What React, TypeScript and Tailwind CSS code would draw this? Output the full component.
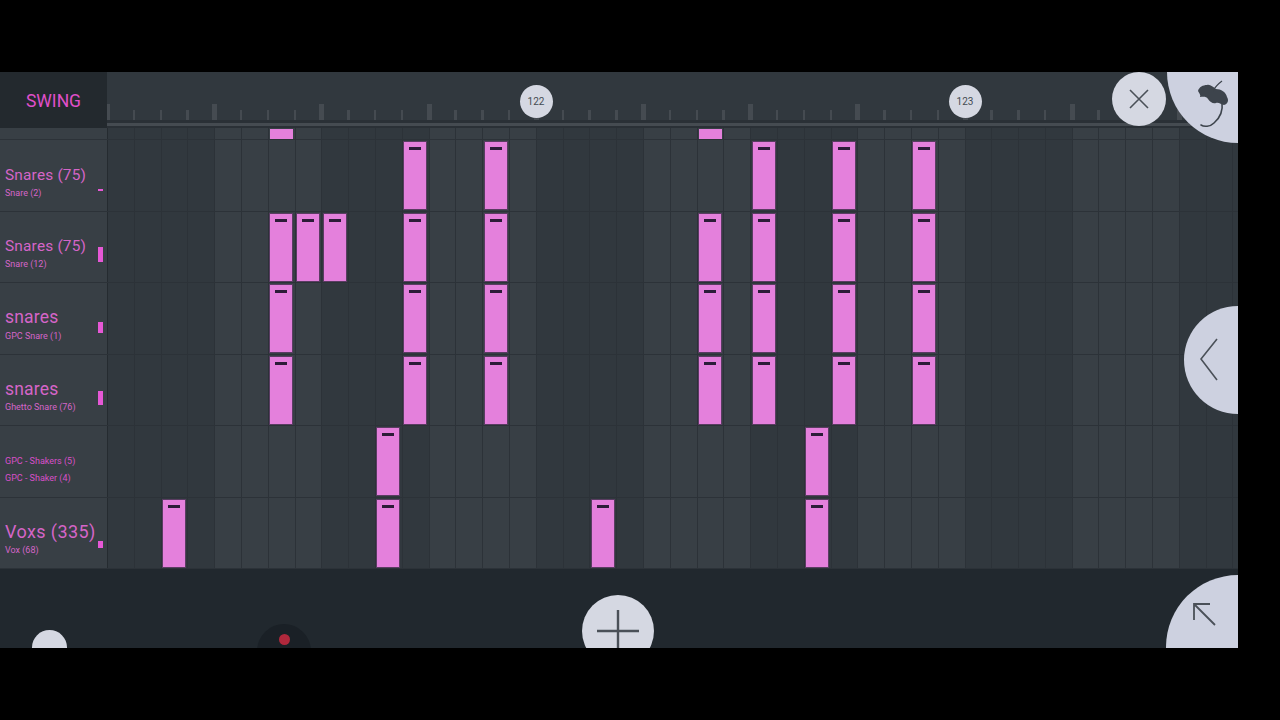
import React from 'react';

const COLS = Array.from({ length: 43 }, (_, i) => i);

type Row = {
  title?: string;
  titleClass?: string;
  labelClass?: string;
  subClass?: string;
  subs: string[];
  bar?: { top: number; height: number };
  notes: number[];
  heightClass: string;
};

const drumHits = [6, 11, 14, 22, 24, 27, 30];

const rows: Row[] = [
  { title: 'Snares (75)', titleClass: 'text-[15.4px] tracking-[0.2px]', labelClass: 'pt-[25px]', subClass: 'mt-[1px]', subs: ['Snare (2)'], bar: { top: 49, height: 2 }, notes: [11, 14, 24, 27, 30], heightClass: 'h-[72px]' },
  { title: 'Snares (75)', titleClass: 'text-[15.4px] tracking-[0.2px]', labelClass: 'pt-[24px]', subClass: 'mt-[1px]', subs: ['Snare (12)'], bar: { top: 35, height: 15 }, notes: [6, 7, 8, 11, 14, 22, 24, 27, 30], heightClass: 'h-[71px]' },
  { title: 'snares', titleClass: 'text-[17.5px] tracking-[0.2px]', labelClass: 'pt-[24px]', subClass: 'mt-[2px]', subs: ['GPC Snare (1)'], bar: { top: 39, height: 11 }, notes: drumHits, heightClass: 'h-[72px]' },
  { title: 'snares', titleClass: 'text-[17.5px] tracking-[0.2px]', labelClass: 'pt-[24px]', subClass: 'mt-[1px]', subs: ['Ghetto Snare (76)'], bar: { top: 36, height: 14 }, notes: drumHits, heightClass: 'h-[71px]' },
  { subs: ['GPC - Shakers (5)', 'GPC - Shaker (4)'], notes: [10, 26], heightClass: 'h-[72px]' },
  { title: 'Voxs (335)', titleClass: 'text-[18px] tracking-[0.4px]', labelClass: 'pt-[24px]', subClass: 'mt-[1px]', subs: ['Vox (68)'], bar: { top: 43, height: 7 }, notes: [2, 10, 18, 26], heightClass: 'h-[71px]' },
];

function Cell({ col, note, short }: { col: number; note: boolean; short?: boolean }) {
  const dark = Math.floor(col / 4) % 2 === 0;
  return (
    <div className={`flex-none w-[26.8px] h-full border-l ${col === 0 ? 'border-[#252b30]' : 'border-[#2c3238]'} ${dark ? 'bg-[#31383e]' : 'bg-[#383f45]'}`}>
      {note && short && <div className="ml-[1px] mt-[1px] w-[23.5px] h-[10px] bg-[#e480dc]" />}
      {note && !short && (
        <div className="ml-[0.5px] mt-[1px] w-[24px] h-[69px] bg-[#e480dc] border border-[#5a3c62] flex justify-center">
          <div className="mt-[5px] w-[12px] h-[2.5px] bg-[#2c1c38]" />
        </div>
      )}
    </div>
  );
}

function TrackRow({ row }: { row: Row }) {
  return (
    <div className={`flex border-b border-[#2c3238] ${row.heightClass}`}>
      <div className="flex-none w-[107px] bg-[#383f45] flex pl-[5px]">
        {row.title ? (
          <div className={`min-w-0 whitespace-nowrap ${row.labelClass}`}>
            <div className={`leading-[20px] text-[#d565c8] ${row.titleClass}`}>{row.title}</div>
            <div className={`leading-[14px] text-[9px] text-[#d565c8] ${row.subClass}`}>{row.subs[0]}</div>
          </div>
        ) : (
          <div className="pt-[28px] flex flex-col gap-[3px] whitespace-nowrap">
            {row.subs.map((s) => (
              <div key={s} className="leading-[14px] text-[9px] text-[#d94fc9]">{s}</div>
            ))}
          </div>
        )}
        {row.bar && (
          <div
            className="flex-none ml-auto mr-[4px] w-[5px] bg-[#e658d6]"
            style={{ marginTop: row.bar.top, height: row.bar.height }}
          />
        )}
      </div>
      {COLS.map((c) => (
        <Cell key={c} col={c} note={row.notes.includes(c)} />
      ))}
    </div>
  );
}

function BarMarker({ label, className }: { label: string; className: string }) {
  return (
    <div className={`absolute top-[13px] w-[33px] h-[33px] rounded-full bg-[#d5d8e2] flex items-center justify-center text-[10px] text-[#444b52] ${className}`}>
      {label}
    </div>
  );
}

export default function App() {
  return (
    <div className="w-[1280px] h-[720px] bg-black pt-[72px] overflow-hidden font-['Roboto',sans-serif]">
      <div className="relative w-[1238px] h-[576px] overflow-hidden bg-[#21282e]">
        {/* ruler */}
        <div className="flex h-[56px]">
          <div className="flex-none w-[107px] bg-[#23292e] flex items-center justify-center pt-[2px]">
            <span className="text-[17.5px] text-[#e04fca]">SWING</span>
          </div>
          <div className="flex-1 min-w-0 bg-[#31383e] flex flex-col overflow-hidden">
            <div className="flex-1 flex items-end">
              {COLS.map((c) => (
                <div key={c} className="flex-none w-[26.8px] h-full flex items-end">
                  <div className={c % 4 === 0 ? 'w-[5px] -ml-[2px] h-[16px] bg-[#454b51]' : 'w-[2.5px] -ml-[1px] h-[10px] bg-[#454b51]'} />
                </div>
              ))}
            </div>
            <div className="h-[3px] bg-[#2a3036]" />
            <div className="h-[3px] bg-[#454b51]" />
            <div className="h-[2px] bg-[#2a3036]" />
          </div>
        </div>

        {/* partial row above the first full track */}
        <div className="flex h-[12px] border-b border-[#2c3238]">
          <div className="flex-none w-[107px] bg-[#383f45]" />
          {COLS.map((c) => (
            <Cell key={c} col={c} note={c === 6 || c === 22} short />
          ))}
        </div>

        {rows.map((row, i) => (
          <TrackRow key={i} row={row} />
        ))}

        {/* overlay controls */}
        <BarMarker label="122" className="left-[519.5px]" />
        <BarMarker label="123" className="left-[948.5px]" />

        <div className="absolute left-[1112px] top-0 w-[54px] h-[54px] rounded-full bg-[#d5d8e2] flex items-center justify-center">
          <svg width="20" height="20" viewBox="0 0 20 20" fill="none" stroke="#4a5058" strokeWidth="1.6">
            <path d="M1 1 L19 19 M19 1 L1 19" />
          </svg>
        </div>

        <div className="absolute left-[1167px] -top-[71px] w-[142px] h-[142px] rounded-full bg-[#cdd1e0]" />
        <svg className="absolute left-[1195px] top-[5px]" width="36" height="54" viewBox="1195 77 36 54" fill="none">
          <path d="M1198 91 C1199 87 1203 85 1207 85 C1210 84 1213 87 1216 89 C1221 89 1226 92 1227 97 C1229 100 1228 104 1224 105 C1221 105 1219 102 1216 103 C1213 104 1210 102 1208 99 C1206 96 1203 97 1200 97 C1201 95 1199 93 1198 91 Z" fill="#3d444c" />
          <path d="M1213 91 C1215 87 1218 84 1222 81" stroke="#3d444c" strokeWidth="1.2" />
          <path d="M1222 102 C1223 110 1220 118 1214 123 C1210 127 1204 127 1201 125" stroke="#3d444c" strokeWidth="1.6" strokeLinecap="round" />
        </svg>

        <div className="absolute left-[1184px] top-[234px] w-[108px] h-[108px] rounded-full bg-[#cdd1e0] flex items-center">
          <svg className="ml-[16px]" width="18" height="44" viewBox="0 0 18 44" fill="none" stroke="#4a5058" strokeWidth="1.6">
            <path d="M17 1 L1 21 L17 42" />
          </svg>
        </div>

        <div className="absolute left-[1166px] top-[503px] w-[144px] h-[144px] rounded-full bg-[#cdd1e0]">
          <svg className="absolute left-[27px] top-[28px]" width="24" height="24" viewBox="0 0 24 24" fill="none" stroke="#4a5058" strokeWidth="1.8">
            <path d="M1 17 V1 H17 M1 1 L22 22" />
          </svg>
        </div>

        <div className="absolute left-[582px] top-[523px] w-[72px] h-[72px] rounded-full bg-[#d5d8e2] flex items-center justify-center">
          <svg width="42" height="42" viewBox="0 0 42 42" fill="none" stroke="#4a5058" strokeWidth="2.4">
            <path d="M0 21 H42 M21 0 V42" />
          </svg>
        </div>

        <div className="absolute left-[32px] top-[558px] w-[35px] h-[35px] rounded-full bg-[#d5d8e2]" />

        <div className="absolute left-[257px] top-[552px] w-[54px] h-[54px] rounded-full bg-[#1a2026] flex justify-center">
          <div className="mt-[10px] w-[11px] h-[11px] rounded-full bg-[#b0283c]" />
        </div>
      </div>
    </div>
  );
}
